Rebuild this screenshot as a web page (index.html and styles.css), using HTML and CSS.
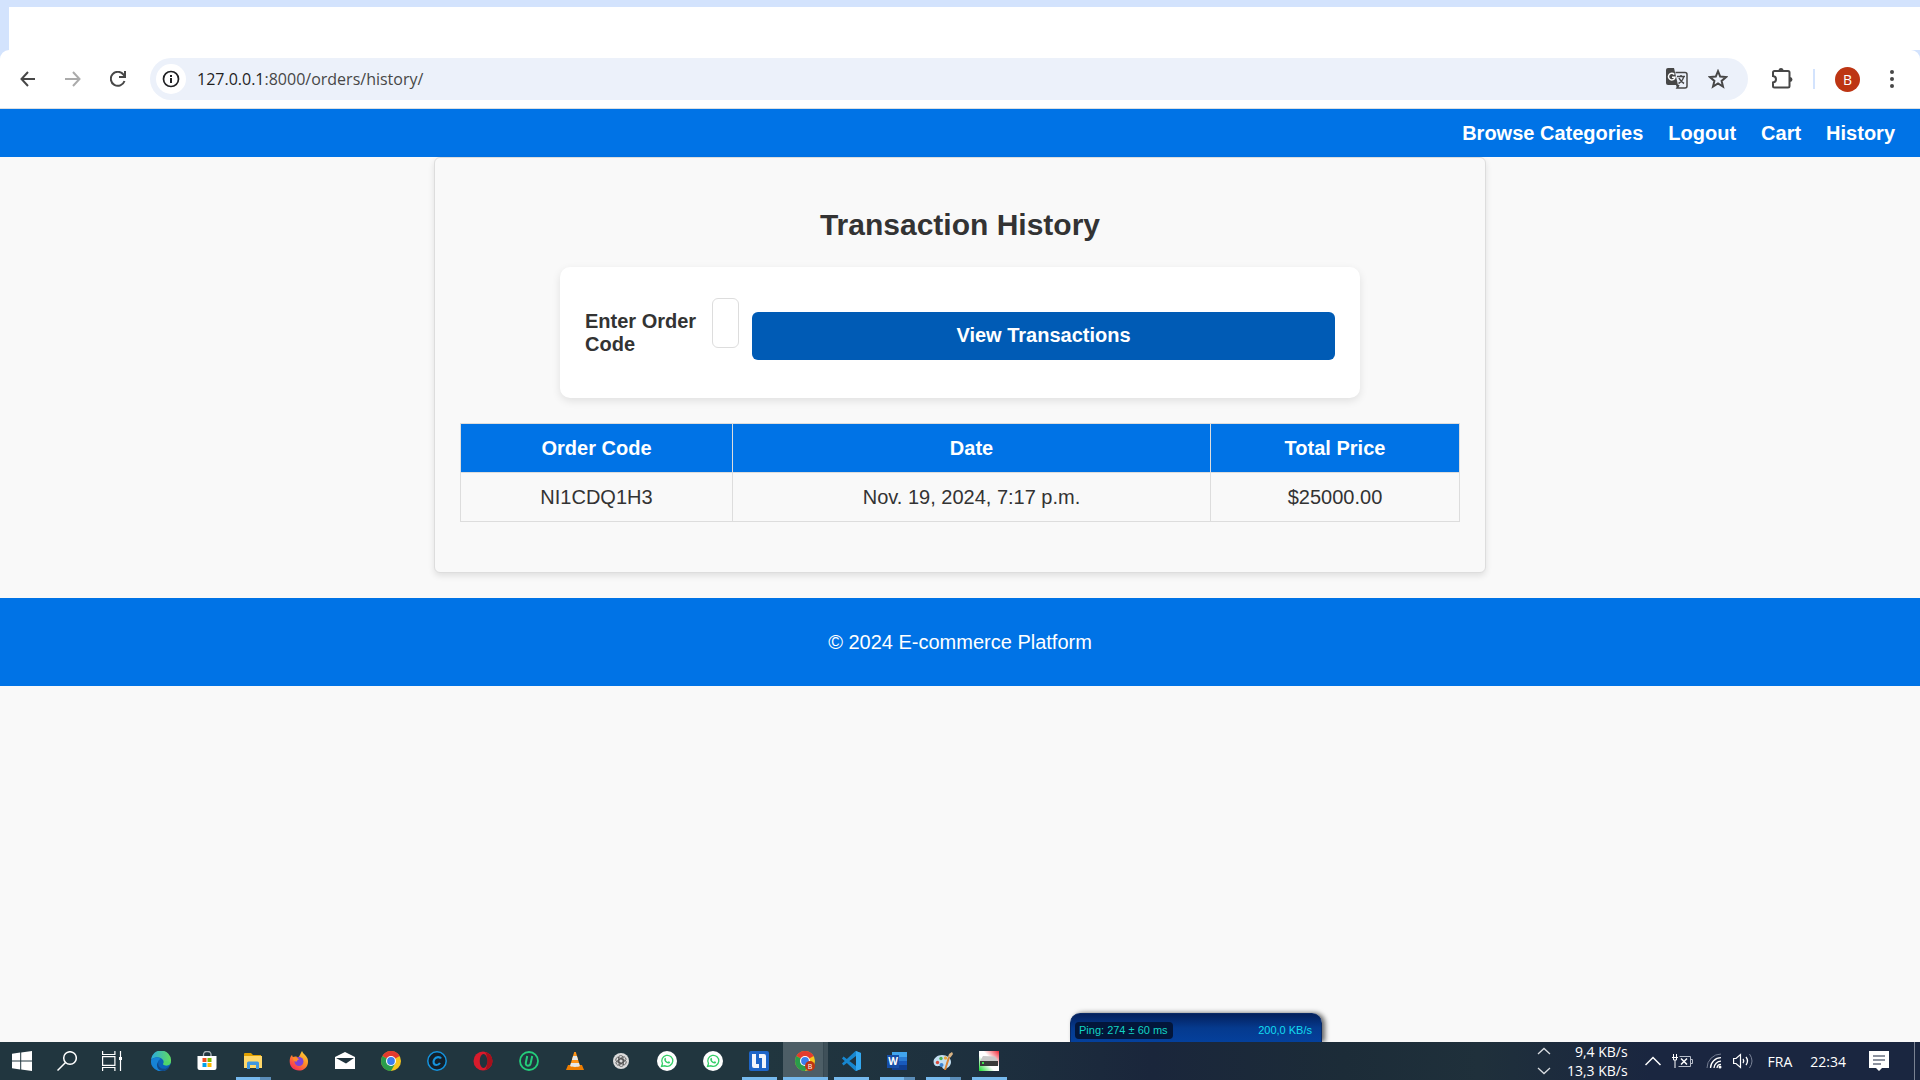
FILE: index.html
```html
<!DOCTYPE html>
<html lang="en">
<head>
<meta charset="utf-8">
<meta name="viewport" content="width=device-width, initial-scale=1">
<title>Transaction History</title>
<link rel="stylesheet" href="styles.css">
</head>
<body>
<div class="tabstrip"><div class="tabstrip-cover"></div></div>
<div class="toolbar-wrap">
<div class="toolbar">
  <button class="tool back" aria-label="Back"><svg width="16" height="16" viewBox="0 0 16 16" fill="none" stroke="#474747" stroke-width="2"><path d="M15 8H2M8 1 1.500 8 8 15"/></svg></button>
  <button class="tool forward" aria-label="Forward"><svg width="16" height="16" viewBox="0 0 16 16" fill="none" stroke="#ababab" stroke-width="2"><path d="M0 8h14M8 1l6.500 7L8 15"/></svg></button>
  <button class="tool reload" aria-label="Reload"><svg width="16" height="16" viewBox="0 0 16 16" fill="none" stroke="#474747" stroke-width="2"><path d="M14.500 10A7 7 0 1 1 13.500 3.700L14.500 5"/><path d="M15 0v6H9" /></svg></button>
  <div class="omnibox">
    <button class="site-info" aria-label="Site information"><svg width="18" height="18" viewBox="0 0 18 18"><circle cx="9" cy="9" r="7.500" fill="none" stroke="#202124" stroke-width="1.700"/><path d="M8 8h2v5H8zM8 5h2v2H8z" fill="#202124"/></svg></button>
    <div class="url"><b>127.0.0.1</b>:8000/orders/history/</div>
    <button class="tool" aria-label="Translate"><svg width="22" height="22" viewBox="0 0 22 22"><path d="M2 0h6l4 17H2a2 2 0 0 1-2-2V2a2 2 0 0 1 2-2z" fill="#474747"/><path d="M9.500 4.500H19a2 2 0 0 1 2 2V18a2 2 0 0 1-2 2h-8l2-3" fill="none" stroke="#474747" stroke-width="1.500"/><path d="M10 17h3l-2 3z" fill="#474747"/><path d="M8.300 6.500a3.300 3.300 0 1 0 .7 2.800H6" fill="none" stroke="#fff" stroke-width="1.500"/><path d="M11 8.500h8M15 7v1.500M17.500 9c-.5 3-2.500 5-5 6.500M13 10c1 2.500 2.500 4 5 5.500" fill="none" stroke="#474747" stroke-width="1.500"/></svg></button>
    <button class="tool" aria-label="Bookmark"><svg width="20" height="20" viewBox="0 0 20 20" fill="none" stroke="#474747" stroke-width="2"><path d="m10 2.200 2.200 5.400 5.800.5-4.400 3.800 1.400 5.700-5-3.100-5 3.100 1.400-5.700L2 8.100l5.800-.5z"/></svg></button>
  </div>
  <button class="tool extensions" aria-label="Extensions"><svg width="22" height="22" viewBox="0 0 22 22"><path d="M2 4.500a1.500 1.500 0 0 1 1.500-1.500H17a1.500 1.500 0 0 1 1.500 1.500V18a1.500 1.500 0 0 1-1.500 1.500H3.500A1.500 1.500 0 0 1 2 18v-3.500c4-.5 4-6 0-6.500z" fill="none" stroke="#474747" stroke-width="2"/><path d="M7.500 2.500a2.500 2.500 0 0 1 5 0zM19 9a2.500 2.500 0 0 1 0 5z" fill="#474747"/></svg></button>
  <span class="divider"></span>
  <button class="avatar" aria-label="Profile">B</button>
  <button class="tool menu" aria-label="Menu"><svg width="4" height="18" viewBox="0 0 4 18" fill="#474747"><circle cx="2" cy="2" r="2"/><circle cx="2" cy="9" r="2"/><circle cx="2" cy="16" r="2"/></svg></button>
</div>
</div>

<div class="page">
  <nav class="site-nav">
    <a href="#">Browse Categories</a>
    <a href="#">Logout</a>
    <a href="#">Cart</a>
    <a href="#">History</a>
  </nav>
  <main class="card">
    <h2>Transaction History</h2>
    <form class="order-form">
      <label for="code">Enter Order Code</label>
      <input id="code" type="text">
      <button type="button">View Transactions</button>
    </form>
    <table class="orders">
      <thead><tr><th class="col-code">Order Code</th><th class="col-date">Date</th><th>Total Price</th></tr></thead>
      <tbody><tr><td>NI1CDQ1H3</td><td>Nov. 19, 2024, 7:17 p.m.</td><td>$25000.00</td></tr></tbody>
    </table>
  </main>
  <footer class="site-footer">© 2024 E-commerce Platform</footer>
</div>

<div class="taskbar">
  <div class="net-widget"><span class="ping">Ping: 274 ± 60 ms</span><span>200,0 KB/s</span></div>
  <div class="apps">
    <button class="app start" aria-label="Start"><svg width="20" height="20" viewBox="0 0 20 20" fill="#fff"><path d="M0 2.700 8.200 1.600v7.900H0zM9.200 1.400 20 0v9.500H9.200zM0 10.500h8.200v7.900L0 17.300zM9.200 10.500H20V20L9.200 18.600z"/></svg></button>
    <button class="app sys" aria-label="Search"><svg width="20" height="20" viewBox="0 0 20 20" fill="none" stroke="#fff" stroke-width="1.500"><circle cx="13" cy="7" r="6.300"/><path d="M8.500 11.500.5 19.500"/></svg></button>
    <button class="app sys last" aria-label="Task view"><svg width="20" height="20" viewBox="0 0 20 20" fill="none" stroke="#fff" stroke-width="1.200"><path d="M.6 0v3.500h12.300V0M.6 20v-3.500h12.300V20M.6 5.700h12.300v8.600H.6zM18.500 0v20"/><path d="M17 6h3v3h-3z" fill="#fff" stroke="none"/></svg></button>
    <button class="app" aria-label="Edge"><svg width="20" height="20" viewBox="0 0 20 20"><defs><linearGradient id="eg" x1="0" x2="1"><stop offset="0" stop-color="#2aa9e0"/><stop offset="1" stop-color="#62dd5d"/></linearGradient></defs><circle cx="10" cy="10" r="10" fill="#0c62b8"/><path d="M0 9a10 10 0 0 1 20 1c0 3-2 4.500-4.500 4.500-2 0-3.500-.8-3.300-1.600.8-1 .8-2.200.2-3.300C10.500 5.500 3 5 0 9z" fill="url(#eg)"/><path d="M0 9.500C2 6 8 5.500 10 8c-4 1-4 6-1 8.500 3 2 6.500 1.500 9.500-1A10 10 0 0 1 0 9.500z" fill="#1683d6"/><path d="M8 9c-2 4 0 8 4 8.500 3 .3 5-.7 6.500-2.500-1 4-4 5-7 5-4 0-6-4-5.500-7z" fill="#114a8b"/><path d="M12.200 12.900c.8-1 .8-2.200.2-3.300l7.500 1.600c-1 3.500-7.500 4-7.700 1.700z" fill="#4fd56b"/></svg></button>
    <button class="app" aria-label="Store"><svg width="20" height="20" viewBox="0 0 20 20"><path d="M6.500 6V3.500a3 3 0 0 1 3-3h1.500a3 3 0 0 1 3 3V6" fill="none" stroke="#aab4b8" stroke-width="1.300"/><path d="M.5 5h19v12a2 2 0 0 1-2 2h-15a2 2 0 0 1-2-2z" fill="#fff"/><path d="M5.500 7h4v4h-4z" fill="#f04e1f"/><path d="M10.500 7h4v4h-4z" fill="#7cb900"/><path d="M5.500 12h4v4h-4z" fill="#00a1ea"/><path d="M10.500 12h4v4h-4z" fill="#fdb800"/></svg></button>
    <button class="app open multi" aria-label="File Explorer"><svg width="20" height="20" viewBox="0 0 20 20"><path d="M1 3a1 1 0 0 1 1-1h6l2 2h8v4H1z" fill="#e0a000"/><path d="M1 5h18v12H1z" fill="#ffd869"/><path d="M4 18v-6a1.500 1.500 0 0 1 1.500-1.500h9A1.500 1.500 0 0 1 16 12v6h-3v-4H7v4z" fill="#3f97e0"/></svg></button>
    <button class="app" aria-label="Firefox"><svg width="20" height="20" viewBox="0 0 20 20"><defs><linearGradient id="fg" x1="1" x2="0.300" y2="1"><stop offset="0" stop-color="#ffe23d"/><stop offset=".5" stop-color="#ff9026"/><stop offset="1" stop-color="#f82d58"/></linearGradient></defs><path d="M13 0c1 3 4 4 5.500 7.500 2 6-2 12-8.500 12S-.5 14 1 7.500c.3-1.600 1-2.600 2-3.500l.8 2C6 5 8 5.500 9 6.500c2-1.500 2.500-4.500 4-6.500z" fill="url(#fg)"/><circle cx="10" cy="10.500" r="4.500" fill="#7d43d8"/><path d="M4 7c3-1 5 0 6 1.500-1.500 0-2 1-2 2-2 .5-4-.5-4-3.500z" fill="#ff8a2a"/></svg></button>
    <button class="app" aria-label="Mail"><svg width="20" height="20" viewBox="0 0 20 20"><path d="M0 6 10 1l10 5v12H0z" fill="#fff"/><path d="M1 7h18l-8 5.500z" fill="#20343e"/></svg></button>
    <button class="app" aria-label="Chrome"><svg width="20" height="20" viewBox="0 0 20 20"><g id="chrome"><circle cx="10" cy="10" r="10" fill="#f6c51c"/><path d="M10 10 1.340 5A10 10 0 0 1 18.700 5z" fill="#e33b2e"/><path d="M10 10 1.340 5A10 10 0 0 0 10 20l4.500-8z" fill="#2a9d4b"/><circle cx="10" cy="10" r="5" fill="#fff"/><circle cx="10" cy="10" r="3.900" fill="#3b7ded"/></g></svg></button>
    <button class="app" aria-label="C browser"><svg width="20" height="20" viewBox="0 0 20 20"><circle cx="10" cy="10" r="9.200" fill="#13202a" stroke="#1593dd" stroke-width="1.500"/><path d="M14 7.500C13 5.500 9 5.500 7.500 8c-2 3-.7 6 1.700 6 1.500 0 2.800-.5 3.800-2" fill="none" stroke="#1593dd" stroke-width="2.200"/></svg></button>
    <button class="app" aria-label="Opera"><svg width="20" height="20" viewBox="0 0 20 20"><ellipse cx="10" cy="10" rx="9.500" ry="9.500" fill="#d81b2c"/><path d="M12 1c4 1 7.500 4 7.500 9s-3.500 8-7.500 9c3-3 3-15 0-18z" fill="#a5101b"/><ellipse cx="10.500" cy="10" rx="3.800" ry="7" fill="#20343e"/></svg></button>
    <button class="app" aria-label="Uninstaller"><svg width="20" height="20" viewBox="0 0 20 20" fill="none" stroke="#24cc7a"><circle cx="10" cy="10" r="9" stroke-width="1.800"/><path d="M8.200 5 6.800 12c-.5 3.500 4 3.500 4.800.5L13.200 5" stroke-width="2"/></svg></button>
    <button class="app" aria-label="VLC"><svg width="20" height="20" viewBox="0 0 20 20"><path d="M3 14h14l2 5H1z" fill="#ee7d00"/><path d="m9.200 1h1.600L15 15c-2 1.500-8 1.500-10 0z" fill="#ff9417"/><path d="m8.100 5h3.800l1.200 4H6.900zM6 12h8l.9 3c-2 1.200-7.800 1.200-9.800 0z" fill="#e6e8e9"/></svg></button>
    <button class="app" aria-label="ChatGPT"><svg width="20" height="20" viewBox="0 0 20 20"><circle cx="10" cy="10" r="8" fill="#dcdcdc"/><g fill="none" stroke="#555" stroke-width=".8"><rect x="7.500" y="4.500" width="4.500" height="8" rx="2.200"/><rect x="7.500" y="4.500" width="4.500" height="8" rx="2.200" transform="rotate(60 10 10)"/><rect x="7.500" y="4.500" width="4.500" height="8" rx="2.200" transform="rotate(120 10 10)"/><rect x="7.500" y="4.500" width="4.500" height="8" rx="2.200" transform="rotate(180 10 10)"/><rect x="7.500" y="4.500" width="4.500" height="8" rx="2.200" transform="rotate(240 10 10)"/><rect x="7.500" y="4.500" width="4.500" height="8" rx="2.200" transform="rotate(300 10 10)"/></g></svg></button>
    <button class="app" aria-label="WhatsApp"><svg width="20" height="20" viewBox="0 0 20 20"><g id="wa"><circle cx="10" cy="10" r="10" fill="#fff"/><path d="m4.500 15.500 1-3A5.500 5.500 0 1 1 8 14.800z" fill="none" stroke="#35cf68" stroke-width="1.300"/><path d="M7.600 7.200c.4-.6 1-.5 1.200.1l.4 1-.5.7c.5 1 1.200 1.600 2.200 2l.7-.7 1.500.7c.2.9-.7 1.700-1.700 1.600-2.400-.4-4.300-2.700-4.200-4.200z" fill="#35cf68"/></g></svg></button>
    <button class="app" aria-label="WhatsApp Business"><svg width="20" height="20" viewBox="0 0 20 20"><use href="#wa"/></svg></button>
    <button class="app open" aria-label="Speed meter"><svg width="20" height="20" viewBox="0 0 20 20"><rect width="20" height="20" rx="2" fill="#1e65c8"/><path d="M3 3h4v10h3v4H5a2 2 0 0 1-2-2zM10 3h5a2 2 0 0 1 2 2v12h-4V7h-3z" fill="#f2f5fc"/></svg></button>
    <button class="app open active" aria-label="Chrome, profile B"><svg width="20" height="20" viewBox="0 0 20 20"><use href="#chrome"/><circle cx="15" cy="15" r="5" fill="#bd3513"/><text x="15" y="17.500" text-anchor="middle" font-family="Open Sans, sans-serif" font-size="7" fill="#fff">B</text></svg></button>
    <button class="app open" aria-label="Visual Studio Code"><svg width="20" height="20" viewBox="0 0 20 20"><path d="M14.500 0 20 2v16l-5.500 2L1 7.500l1.500-2L15 15V5L2.500 14.500l-1.500-2z" fill="#1787cf"/><path d="m15 0 5 2v16l-5 2z" fill="#33a8f0"/></svg></button>
    <button class="app open multi" aria-label="Word"><svg width="20" height="20" viewBox="0 0 20 20"><path d="M5 1h15v6H5z" fill="#41a5ee"/><path d="M5 6h15v5H5z" fill="#2b7cd3"/><path d="M5 10h15v5H5z" fill="#185abd"/><path d="M5 14h15v5H5z" fill="#103f91"/><path d="M0 4h12v13H0z" fill="#174ea6"/><text x="6" y="14" text-anchor="middle" font-family="Open Sans, sans-serif" font-weight="700" font-size="10" fill="#fff">W</text></svg></button>
    <button class="app open multi" aria-label="Paint"><svg width="20" height="20" viewBox="0 0 20 20"><path d="M1 13c-2-5 3-9 8-9s9 3 9 7-4 7-7 7c-2 0-1-3-4-3-2 0-5 1-6-2z" fill="#c4dff2"/><circle cx="4.500" cy="11.500" r="1.700" fill="#d84b3e"/><circle cx="8" cy="7.500" r="1.700" fill="#4caf50"/><circle cx="12.500" cy="7" r="1.700" fill="#e8a33d"/><circle cx="8.500" cy="14" r="2" fill="#3d84d1"/><path d="m11 19 4-13 2 .5L13 19z" fill="#d98436"/><path d="m15 6 1-3 3-2 1 2-2.500 3.500z" fill="#d9b384"/></svg></button>
    <button class="app open" aria-label="Disk meter"><svg width="20" height="20" viewBox="0 0 20 20"><defs><linearGradient id="dg" x1="0" y1="1" x2="1" y2="0"><stop offset="0" stop-color="#13dc28"/><stop offset=".4" stop-color="#fff"/><stop offset=".6" stop-color="#fff"/><stop offset="1" stop-color="#f02834"/></linearGradient></defs><path d="M0 0h20v20H0z" fill="url(#dg)"/><path d="m4 5 12 .5L19 10H1z" fill="#c9c9c9"/><path d="M1 10h18v5H1z" fill="#3a3a3a"/><path d="M3 11h2v2H3z" fill="#3fe04d"/></svg></button>
  </div>
  <div class="tray">
    <svg class="rates" width="14" height="28" viewBox="0 0 14 28" fill="none" stroke="#d8dce0" stroke-width="1.300"><path d="m1 7 6-5.500L13 7M1 21l6 5.500 6-5.500"/></svg>
    <div class="speed">9,4 KB/s<br>13,3 KB/s</div>
    <svg class="caret" width="16" height="10" viewBox="0 0 16 10" fill="none" stroke="#fff" stroke-width="1.500"><path d="m.5 9 7.500-7.500L15.500 9"/></svg>
    <svg class="battery" width="21" height="14" viewBox="0 0 21 14" fill="none" stroke="#fff"><path d="M6.500 12.500h12v-10h-11M19 5.500h1.500v4H19" stroke="#b6bcc8"/><path d="M1.500 0v3M4.500 0v3M0 3.500h6M1.500 4v2h3V4M3 6v8"/><path d="m9 4.500 6 6m0-6-6 6" stroke-width="1.500"/></svg>
    <svg class="wifi" width="16" height="16" viewBox="0 0 16 16" fill="none" stroke="#fff"><path d="M1 15A14 14 0 0 1 15 1" stroke="#747d92"/><path d="M4.500 15A10.500 10.500 0 0 1 15 4.700M8 15a7 7 0 0 1 7-6.800M11 15a4 4 0 0 1 4-3.700" stroke-width="1.300"/><circle cx="14" cy="14" r="1.500" fill="#fff" stroke="none"/></svg>
    <svg class="volume" width="21" height="16" viewBox="0 0 21 16" fill="none" stroke="#fff"><path d="M.6 5.500H3L7.500 1.500v13L3 10.500H.6z" stroke-width="1.200"/><path d="M10 6q1.500 2 0 4M13 4q3 4 0 8" stroke-width="1.300"/><path d="M16.500 1q5 7 0 14" stroke="#7b8498"/></svg>
    <span class="lang">FRA</span>
    <span class="clock">22:34</span>
    <svg class="notice" width="20" height="20" viewBox="0 0 20 20"><path d="M0 0h20v17h-7l-3 3-3-3H0z" fill="#fff"/><path d="M4 5h12M4 9h12M4 13h8" stroke="#1a2640" stroke-width="1.200"/></svg>
    <span class="peek"></span>
  </div>
</div>
</body>
</html>
```

FILE: styles.css
```css
* { box-sizing: border-box; }

body {
  margin: 0;
  min-height: 100vh;
  display: flex;
  flex-direction: column;
  background: #f9f9f9;
  color: #333;
  font-family: Arial, "Liberation Sans", sans-serif;
  font-size: 20px;
  line-height: 23px;
}

button { border: 0; padding: 0; font: inherit; background: none; }
svg { display: block; flex: none; }

/* Browser frame */
.tabstrip { background: #d3e3fd; padding: 7px 0 0 9px; }
.tabstrip-cover { height: 43px; background: #fff; }
.toolbar-wrap { background: #d3e3fd; }
.toolbar {
  display: flex;
  align-items: center;
  height: 59px;
  padding: 0 26px 0 20px;
  background: #fff;
  border-bottom: 1px solid #dbdfe3;
  border-radius: 9px 9px 0 0;
}
.tool { display: flex; align-items: center; justify-content: center; }
.forward { margin-left: 29px; }
.reload { margin-left: 29px; }
.omnibox {
  flex: 1;
  display: flex;
  align-items: center;
  gap: 20px;
  height: 42px;
  margin-left: 24px;
  padding: 0 20px 0 6px;
  border-radius: 21px;
  background: #ecf1fa;
}
.site-info {
  width: 30px;
  height: 30px;
  display: flex;
  align-items: center;
  justify-content: center;
  border-radius: 50%;
  background: #fff;
}
.url {
  flex: 1;
  margin-left: -9px;
  font-family: "Open Sans", sans-serif;
  font-size: 16px;
  color: #474747;
}
.url b { font-weight: 400; color: #1f1f1f; }
.extensions { margin-left: 23px; }
.divider { width: 2px; height: 20px; margin: 0 20px; background: #d3e3fd; }
.avatar {
  width: 25px;
  height: 25px;
  border-radius: 50%;
  background: #bd3513;
  color: #fff;
  font-family: "Open Sans", sans-serif;
  font-size: 14px;
}
.menu { margin-left: 30px; }

/* Site */
.page { flex: 1; }
.site-nav {
  display: flex;
  justify-content: flex-end;
  gap: 25px;
  padding: 13px 25px 12px;
  background: #0073e6;
}
.site-nav a { color: #fff; font-weight: 700; text-decoration: none; }
.card {
  max-width: 1052px;
  margin: 0 auto 25px;
  padding: 25px 25px 50px;
  border: 1px solid #ddd;
  border-radius: 6px;
  background: #f9f9f9;
  box-shadow: 0 3px 6px rgba(0, 0, 0, .1);
}
.card h2 {
  margin: 25px 0;
  font-size: 30px;
  line-height: 34px;
  text-align: center;
}
.order-form {
  display: flex;
  align-items: center;
  max-width: 800px;
  margin: 0 auto 25px;
  padding: 31px 25px;
  border-radius: 10px;
  background: #fff;
  box-shadow: 0 3px 8px rgba(0, 0, 0, .1);
}
.order-form label { width: 127px; flex: none; font-weight: 700; }
.order-form input {
  width: 27px;
  height: 50px;
  margin: 0 13px 19px 0;
  padding: 12px;
  border: 1px solid #ddd;
  border-radius: 6px;
  font: inherit;
}
.order-form button {
  flex: 1;
  height: 48px;
  margin-top: 6px;
  border-radius: 6px;
  background: #005bb5;
  color: #fff;
  font-weight: 700;
}
.orders { width: 100%; border-collapse: collapse; text-align: center; }
.orders th, .orders td { padding: 13px 12px 12px; border: 1px solid #ddd; }
.orders th { background: #0073e6; color: #fff; }
.col-code { width: 272px; }
.col-date { width: 478px; }
.site-footer {
  padding: 33px 25px 32px;
  background: #0073e6;
  color: #fff;
  text-align: center;
}

/* Desktop taskbar */
.taskbar {
  position: relative;
  display: flex;
  justify-content: space-between;
  height: 38px;
  background: linear-gradient(90deg, #21363f 0%, #21363f 40%, #1d2f3e 52%, #1a263b 60%, #1c2c38 70%, #1f303b 77%, #1a2640 86%, #1a2640 100%);
  color: #fff;
  font-family: "Open Sans", sans-serif;
  font-size: 14px;
  line-height: 19px;
}
.apps { display: flex; }
.app {
  width: 46px;
  height: 38px;
  display: flex;
  align-items: center;
  justify-content: center;
}
.app.start { width: 44px; }
.app.sys { width: 45px; }
.app.last { margin-right: 4px; }
.app.open { background: linear-gradient(#76b9ed, #76b9ed) 50% 100% / 35px 3px no-repeat; }
.app.open.multi { background-image: linear-gradient(90deg, #76b9ed 24px, #5b8db8 24px); }
.app.open.active {
  background: linear-gradient(#76b9ed, #76b9ed) 1px 100% / 45px 3px no-repeat,
    linear-gradient(90deg, transparent 1px, #4d5e66 1px, #4d5e66 41px, #2f414a 41px, #3f5059 42px, #3f5059 46px);
}
.tray { display: flex; align-items: center; padding-right: 5px; }
.speed { width: 77px; text-align: right; }
.caret { margin-left: 17px; }
.battery { margin-left: 11px; }
.wifi { margin-left: 13px; }
.volume { margin-left: 11px; }
.lang { margin-left: 14px; }
.clock { margin-left: 18px; }
.notice { margin-left: 23px; }
.peek { width: 1px; height: 38px; margin-left: 25px; background: #7a8292; }

/* Network meter floating above the taskbar */
.net-widget {
  position: absolute;
  left: 1070px;
  bottom: 38px;
  width: 252px;
  height: 29px;
  display: flex;
  align-items: center;
  justify-content: space-between;
  padding: 5px 9px 0 4px;
  border: 1px solid #0a2a66;
  border-bottom: 0;
  border-radius: 10px 10px 0 0;
  background: linear-gradient(#04205c, #053a8e 50%, #04409c);
  box-shadow: 3px 0 5px rgba(0, 0, 0, .6);
  clip-path: inset(-8px -12px 0 -8px);
  color: #12dcf0;
  font-family: "Liberation Sans", sans-serif;
  font-size: 11px;
  line-height: 17px;
}
.ping { padding: 0 5px 0 4px; border-radius: 4px; background: #03163a; color: #12d4c4; }
```
